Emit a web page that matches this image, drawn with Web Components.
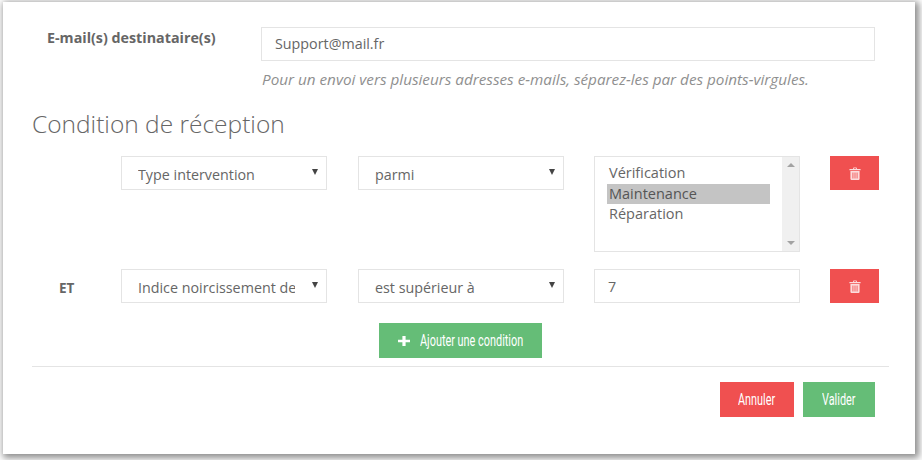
<!DOCTYPE html>
<html lang="fr">
<head>
<meta charset="utf-8">
<title>Condition de réception</title>
<style>
  html, body { margin: 0; padding: 0; background: #fff; }
  body { width: 922px; height: 460px; overflow: hidden; font-family: "Open Sans", sans-serif; color: #666; }
</style>
</head>
<body>
<x-dialog>
  <x-field label="E-mail(s) destinataire(s)" value="Support@mail.fr"
           help="Pour un envoi vers plusieurs adresses e-mails, séparez-les par des points-virgules."></x-field>
  <h2 slot="title">Condition de réception</h2>
  <x-condition slot="rows">
    <x-select>Type intervention</x-select>
    <x-select>parmi</x-select>
    <x-listbox items="Vérification|Maintenance|Réparation" selected="1"></x-listbox>
  </x-condition>
  <x-condition slot="rows" label="ET">
    <x-select>Indice noircissement de</x-select>
    <x-select>est supérieur à</x-select>
    <x-textbox>7</x-textbox>
  </x-condition>
  <x-button slot="add" color="green" icon="plus" width="163">Ajouter une condition</x-button>
  <x-button slot="actions" color="red" width="74">Annuler</x-button>
  <x-button slot="actions" color="green" width="72">Valider</x-button>
</x-dialog>

<script>
class Base extends HTMLElement {
  constructor() {
    super();
    this.attachShadow({ mode: 'open' });
  }
  render(html) {
    this.shadowRoot.innerHTML = html;
  }
}

class XDialog extends Base {
  connectedCallback() {
    this.render(`
      <style>
        :host {
          display: block;
          box-sizing: border-box;
          width: 912px;
          height: 452px;
          margin: 2px 0 0 3px;
          padding: 25px 26px 0 29px;
          background: #fff;
          box-shadow: 2px 2px 7px 2px rgba(0,0,0,0.45);
        }
        ::slotted(h2) {
          margin: 19px 0 16px;
          font: 300 24.5px/33px "Open Sans", sans-serif;
          color: #666;
        }
        .rows { display: flex; flex-direction: column; gap: 17px; }
        .add { display: flex; justify-content: center; margin: 20px 0 8px; }
        hr { margin: 0 0 15px; border: 0; border-top: 1px solid #e4e4e4; }
        .actions { display: flex; justify-content: flex-end; gap: 9px; margin-right: 14px; }
      </style>
      <slot></slot>
      <slot name="title"></slot>
      <div class="rows"><slot name="rows"></slot></div>
      <div class="add"><slot name="add"></slot></div>
      <hr>
      <div class="actions"><slot name="actions"></slot></div>
    `);
  }
}

class XField extends Base {
  connectedCallback() {
    this.render(`
      <style>
        :host { display: grid; grid-template-columns: 229px 614px; }
        label { padding: 2px 0 0 15px; font: 700 14.3px/18px "Open Sans", sans-serif; color: #666; white-space: nowrap; }
        .box {
          box-sizing: border-box; height: 34px; padding: 0 13px;
          border: 1px solid #e4e4e4; background: #fff;
          font: 14.3px/32px "Open Sans", sans-serif; color: #666;
        }
        .help { grid-column: 2; margin: 9px 0 0 1px; font: italic 15.25px/18px "Open Sans", sans-serif; color: #8f8f8f; white-space: nowrap; }
      </style>
      <label>${this.getAttribute('label')}</label>
      <div class="box">${this.getAttribute('value')}</div>
      <div class="help">${this.getAttribute('help')}</div>
    `);
  }
}

class XCondition extends Base {
  connectedCallback() {
    const label = this.getAttribute('label') || '';
    this.render(`
      <style>
        :host {
          display: grid;
          grid-template-columns: 89px 206px 31px 206px 30px 206px 30px 49px;
          align-items: start;
        }
        ::slotted(:nth-child(1)) { grid-column: 2; }
        ::slotted(:nth-child(2)) { grid-column: 4; }
        ::slotted(:nth-child(3)) { grid-column: 6; }
        .label { padding: 10px 0 0 27px; font: 700 13.5px/18px "Open Sans", sans-serif; color: #666; }
        .del {
          grid-column: 8; height: 34px; background: #f05050;
          display: flex; align-items: center; justify-content: center;
        }
        svg { width: 12px; height: 13px; margin-left: 1px; }
      </style>
      <div class="label">${label}</div>
      <slot></slot>
      <div class="del">
        <svg viewBox="0 0 11 12" preserveAspectRatio="none" aria-hidden="true">
          <path fill="#fff" fill-opacity=".8" d="M3.6 1.9 4.1.5h2.8l.5 1.4H10.6v1.2H.4V1.9zM4.7 1.1l-.2.8h2l-.2-.8zM1.3 3.8h8.4v7.4l-.7.7H2l-.7-.7zM3.2 5v5.6h.8V5zm1.9 0v5.6h.8V5zm1.9 0v5.6h.8V5z"/>
        </svg>
      </div>
    `);
  }
}

class XSelect extends Base {
  connectedCallback() {
    this.render(`
      <style>
        :host {
          display: flex; box-sizing: border-box; height: 34px; align-items: center;
          padding: 0 8px 0 16px; border: 1px solid #e4e4e4; background: #fff;
          font: 14.3px/32px "Open Sans", sans-serif; color: #666;
        }
        .text { width: 157px; overflow: hidden; white-space: nowrap; flex: none; padding-top: 2px; box-sizing: border-box; height: 32px; }
        .arrow {
          margin: -2px 0 0 auto; width: 0; height: 0;
          border: 3.5px solid transparent; border-top: 6px solid #444; border-bottom: 0;
        }
      </style>
      <span class="text"><slot></slot></span>
      <span class="arrow"></span>
    `);
  }
}

class XListbox extends Base {
  connectedCallback() {
    const sel = this.getAttribute('selected');
    const items = this.getAttribute('items').split('|')
      .map((t, i) => `<div class="opt${String(i) === sel ? ' on' : ''}">${t}</div>`).join('');
    this.render(`
      <style>
        :host {
          display: flex; box-sizing: border-box; height: 96px;
          border: 1px solid #e4e4e4; background: #fff;
          font: 14.5px/20.5px "Open Sans", sans-serif; color: #666;
        }
        .list { flex: 1; padding: 6px 12px 0; }
        .opt { padding-left: 2px; }
        .on { background: #c4c4c4; color: #555; }
        .bar {
          width: 17px; background: #f0f0f0; display: flex; flex-direction: column;
          justify-content: space-between; align-items: center; padding: 6px 0;
          box-sizing: border-box;
        }
        .up, .down { width: 0; height: 0; border: 4px solid transparent; }
        .up { border-top: 0; border-bottom: 4px solid #a3a3a3; }
        .down { border-bottom: 0; border-top: 4px solid #a3a3a3; }
      </style>
      <div class="list">${items}</div>
      <div class="bar"><span class="up"></span><span class="down"></span></div>
    `);
  }
}

class XTextbox extends Base {
  connectedCallback() {
    this.render(`
      <style>
        :host {
          display: block; box-sizing: border-box; height: 34px; padding: 1px 13px 0;
          border: 1px solid #e4e4e4; background: #fff;
          font: 14.3px/32px "Open Sans", sans-serif; color: #666;
        }
      </style>
      <slot></slot>
    `);
  }
}

class XButton extends Base {
  connectedCallback() {
    const bg = this.getAttribute('color') === 'red' ? '#f05050' : '#65bd77';
    const plus = this.getAttribute('icon') === 'plus'
      ? `<svg viewBox="0 0 12 12" preserveAspectRatio="none"><path fill="#fff" d="M4.4 0h3.2v4.4H12v3.2H7.6V12H4.4V7.6H0V4.4h4.4z"/></svg>`
      : '';
    this.render(`
      <style>
        :host {
          display: flex; align-items: center; justify-content: center; gap: 10px;
          box-sizing: border-box; height: 35px; width: ${this.getAttribute('width')}px;
          background: ${bg}; color: #fff;
        }
        svg { width: 12px; height: 10px; flex: none; }
        .t { display: inline-block; white-space: nowrap; font: 400 16px/35px Roboto, sans-serif; transform: scaleX(.68); transform-origin: 0 50%; }
      </style>
      ${plus}<span class="t"><slot></slot></span>
    `);
    // condensed text: hand back the width lost in the horizontal squeeze
    const t = this.shadowRoot.querySelector('.t');
    t.style.marginRight = (t.offsetWidth * -0.32) + 'px';
  }
}

customElements.define('x-dialog', XDialog);
customElements.define('x-field', XField);
customElements.define('x-condition', XCondition);
customElements.define('x-select', XSelect);
customElements.define('x-listbox', XListbox);
customElements.define('x-textbox', XTextbox);
customElements.define('x-button', XButton);
</script>
</body>
</html>
